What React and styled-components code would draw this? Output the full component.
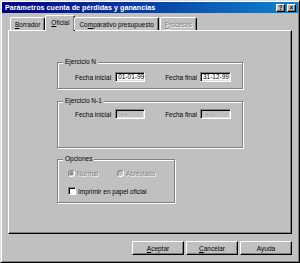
import React from 'react';
import styled, {createGlobalStyle} from 'styled-components';

const GlobalStyle = createGlobalStyle`
  html, body {
    margin: 0;
    padding: 0;
    background: #c0c0c0;
  }
  * {
    box-sizing: border-box;
  }
`

const Window = styled.div`
  width: 300px;
  height: 263px;
  background: #c0c0c0;
  display: flex;
  flex-direction: column;
  padding: 2px;
  border-top: 1px solid #dfdfdf;
  border-left: 1px solid #dfdfdf;
  border-right: 1px solid #000;
  border-bottom: 1px solid #000;
  box-shadow: inset 1px 1px #fff, inset -1px -1px #808080;
  font-family: "Liberation Sans", Arial, sans-serif;
  font-size: 6.5px;
  color: #000;
`

const TitleBar = styled.div`
  height: 11px;
  margin: -1px -1px 0;
  display: flex;
  align-items: center;
  padding: 0 2px 0 3px;
  background: linear-gradient(to right, #000080, #1084d0);
  color: #fff;
  font-weight: bold;
  font-size: 7.2px;
`

const TitleText = styled.div`
  flex: 1;
  white-space: nowrap;
`

const TitleButton = styled.div`
  width: 9px;
  height: 8px;
  margin-left: ${p => p.gap || 0}px;
  background: #c0c0c0;
  border-top: 1px solid #fff;
  border-left: 1px solid #fff;
  border-right: 1px solid #000;
  border-bottom: 1px solid #000;
  box-shadow: inset -1px -1px #808080;
  color: #000;
  font-size: 6.5px;
  font-weight: bold;
  line-height: 6px;
  text-align: center;
`

const Content = styled.div`
  flex: 1;
  display: flex;
  flex-direction: column;
  padding: 2px 5px 0;
`

const TabStrip = styled.div`
  display: flex;
  align-items: flex-end;
  height: 15px;
  padding-left: 2px;
  position: relative;
  z-index: 1;
`

const Tab = styled.div`
  height: ${p => (p.active ? 16 : 13)}px;
  margin: ${p => (p.active ? '0 -1px -1px -1px' : '0 1px 0 0')};
  padding: 0 ${p => (p.active ? 5 : 4)}px;
  display: flex;
  align-items: center;
  background: #c0c0c0;
  border-top: 1px solid #fff;
  border-left: 1px solid #fff;
  border-right: 1px solid #000;
  border-radius: 2px 2px 0 0;
  box-shadow: inset -1px 0 #808080;
  white-space: nowrap;
  color: ${p => (p.disabled ? '#808080' : '#000')};
  text-shadow: ${p => (p.disabled ? '1px 1px #fff' : 'none')};
  padding-bottom: ${p => (p.active ? 2 : 0)}px;
`

const Panel = styled.div`
  height: 204px;
  border-top: 1px solid #fff;
  border-left: 1px solid #fff;
  border-right: 1px solid #000;
  border-bottom: 1px solid #000;
  box-shadow: inset -1px -1px #808080;
  display: flex;
  flex-direction: column;
  align-items: center;
  padding-top: 31px;
`

const Column = styled.div`
  width: 186px;
  display: flex;
  flex-direction: column;
`

const Group = styled.div`
  position: relative;
  width: ${p => p.width || 186}px;
  height: ${p => p.height}px;
  margin-top: ${p => p.top || 0}px;
  border: 1px solid #808080;
  box-shadow: inset 1px 1px #fff, 1px 1px #fff;
  padding: ${p => p.pad || '0'};
  display: flex;
  flex-direction: column;
`

const Legend = styled.div`
  position: absolute;
  top: -5px;
  left: 5px;
  padding: 0 2px;
  background: #c0c0c0;
  line-height: 8px;
`

const Row = styled.div`
  display: flex;
  align-items: center;
  height: 10px;
  margin-top: ${p => p.top || 0}px;
  padding-left: ${p => p.left || 0}px;
`

const Label = styled.span`
  margin-right: ${p => p.gap || 3}px;
  color: ${p => (p.disabled ? '#808080' : '#000')};
  text-shadow: ${p => (p.disabled ? '1px 1px #fff' : 'none')};
  white-space: nowrap;
`

const Field = styled.div`
  width: ${p => p.width || 30}px;
  height: 10px;
  margin-right: ${p => p.gap || 0}px;
  background: ${p => (p.disabled ? '#c0c0c0' : '#fff')};
  border-top: 1px solid #808080;
  border-left: 1px solid #808080;
  border-right: 1px solid #fff;
  border-bottom: 1px solid #fff;
  box-shadow: inset 1px 1px #000, inset -1px -1px #dfdfdf;
  padding-left: ${p => (p.disabled ? 5 : 2)}px;
  line-height: 8px;
  color: ${p => (p.disabled ? '#808080' : '#000')};
  white-space: nowrap;
`

const Radio = styled.span`
  width: 7px;
  height: 7px;
  border-radius: 50%;
  border: 1px solid;
  border-color: #808080 #fff #fff #808080;
  background: #c0c0c0;
  margin-right: 2px;
  display: flex;
  align-items: center;
  justify-content: center;
  &::after {
    content: '';
    display: ${p => (p.checked ? 'block' : 'none')};
    width: 3px;
    height: 3px;
    border-radius: 50%;
    background: #808080;
  }
`

const Check = styled.span`
  width: 8px;
  height: 8px;
  border-top: 1px solid #808080;
  border-left: 1px solid #808080;
  border-right: 1px solid #fff;
  border-bottom: 1px solid #fff;
  background: #fff;
  box-shadow: inset 1px 1px #000;
  margin-right: 2px;
`

const ButtonBar = styled.div`
  display: flex;
  justify-content: flex-end;
  gap: 2px;
  margin-top: 7px;
`

const Button = styled.div`
  width: 52px;
  height: 14px;
  display: flex;
  align-items: center;
  justify-content: center;
  border-top: 1px solid #fff;
  border-left: 1px solid #fff;
  border-right: 1px solid #000;
  border-bottom: 1px solid #000;
  box-shadow: inset -1px -1px #808080;
`

const App = () => {
    return (
        <>
            <GlobalStyle/>
            <Window>
                <TitleBar>
                    <TitleText>Parámetros cuenta de pérdidas y ganancias</TitleText>
                    <TitleButton>?</TitleButton>
                    <TitleButton gap={2}>×</TitleButton>
                </TitleBar>
                <Content>
                    <TabStrip>
                        <Tab><u>B</u>orrador</Tab>
                        <Tab active><u>O</u>ficial</Tab>
                        <Tab>Co<u>m</u>parativo presupuesto</Tab>
                        <Tab disabled><u>P</u>rocesos</Tab>
                    </TabStrip>
                    <Panel>
                        <Column>
                            <Group height={27} pad="9px 0 0">
                                <Legend>Ejercicio N</Legend>
                                <Row left={17}>
                                    <Label gap={4}>Fecha inicial</Label>
                                    <Field gap={20}>01-01-99</Field>
                                    <Label>Fecha final</Label>
                                    <Field width={31}>31-12-99</Field>
                                </Row>
                            </Group>
                            <Group height={47} top={12} pad="7px 0 0">
                                <Legend>Ejercicio N-1</Legend>
                                <Row left={17}>
                                    <Label gap={4}>Fecha inicial</Label>
                                    <Field gap={20} disabled>- -</Field>
                                    <Label>Fecha final</Label>
                                    <Field width={31} disabled>- -</Field>
                                </Row>
                            </Group>
                            <Group width={118} height={44} top={11} pad="8px 0 0">
                                <Legend>Opciones</Legend>
                                <Row left={10}>
                                    <Radio checked/>
                                    <Label gap={19} disabled>Normal</Label>
                                    <Radio/>
                                    <Label disabled>Abreviado</Label>
                                </Row>
                                <Row left={10} top={8}>
                                    <Check/>
                                    <Label>Imprimir en papel oficial</Label>
                                </Row>
                            </Group>
                        </Column>
                    </Panel>
                    <ButtonBar>
                        <Button><u>A</u>ceptar</Button>
                        <Button><u>C</u>ancelar</Button>
                        <Button>Ayuda</Button>
                    </ButtonBar>
                </Content>
            </Window>
        </>
    );
}

export default App;
